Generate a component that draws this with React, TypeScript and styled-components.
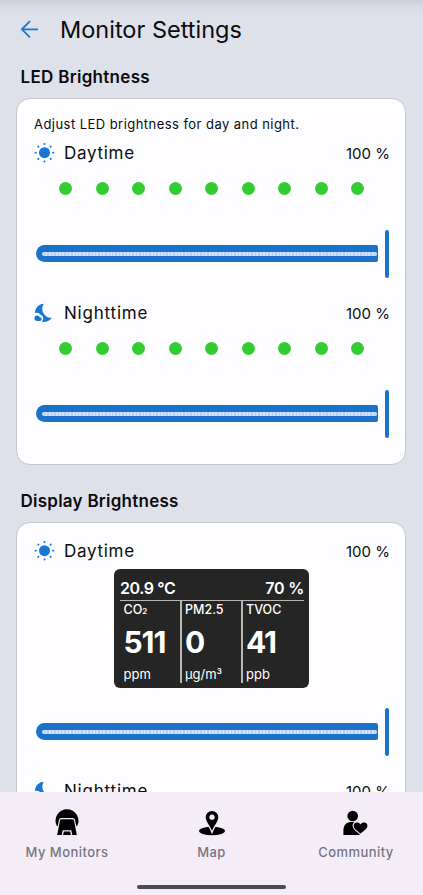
import React from 'react';
import styled, { createGlobalStyle } from 'styled-components';

const GlobalStyle = createGlobalStyle`
  * { box-sizing: border-box; }
  body { margin: 0; background: #dfe1ea; font-family: Inter, "Noto Sans", sans-serif; color: #0b0b0f; }
`;

const Screen = styled.div`
  height: 895px;
  display: flex;
  flex-direction: column;
  overflow: hidden;
  background: linear-gradient(#cdcfd7 0, #d8dae3 6px, #dfe1ea 14px);
`;

const Header = styled.header`
  flex: none;
  height: 60px;
  display: flex;
  align-items: center;
  padding-left: 19px;
`;

const Label = styled.span<{ $size: number; $gap?: number; $weight?: number; $color?: string }>`
  font-size: ${(p) => p.$size}px;
  letter-spacing: ${(p) => p.$gap ?? 0}px;
  font-weight: ${(p) => p.$weight ?? 400};
  color: ${(p) => p.$color ?? 'inherit'};
  line-height: 1;
  white-space: nowrap;
`;

const RowLabel = styled(Label)`
  padding-top: 1px;
`;

const BackIcon = styled.svg`
  width: 22px;
  height: 22px;
  margin-right: 19px;
`;

const Content = styled.main`
  flex: 1;
  min-height: 0;
  overflow: hidden;
  padding: 0 17px 0 16px;
`;

const SectionTitle = styled.h2<{ $height: number }>`
  margin: 0;
  height: ${(p) => p.$height}px;
  padding: 0 0 12px 4.5px;
  display: flex;
  align-items: flex-end;
`;

const Card = styled.section<{ $top: number; $height: number }>`
  height: ${(p) => p.$height}px;
  padding: ${(p) => p.$top}px 15px 0 17px;
  background: #fdfdff;
  border: 1px solid #c5c6ce;
  border-radius: 14px;
`;

const Hint = styled.div`
  height: 17px;
  margin-bottom: 2px;
  display: flex;
  align-items: center;
`;

const Row = styled.div`
  height: 36px;
  display: flex;
  align-items: center;
`;

const RowIcon = styled.svg`
  width: 22px;
  height: 22px;
  margin-right: 8px;
`;

const RowValue = styled.div`
  margin-left: auto;
  display: flex;
`;

const Dots = styled.div`
  height: 34px;
  padding: 0 26px 0 25px;
  display: flex;
  align-items: center;
  justify-content: space-between;
`;

const Dot = styled.i`
  width: 13px;
  height: 13px;
  border-radius: 50%;
  background: #33cc33;
`;

const Slider = styled.div<{ $top: number; $bottom: number }>`
  height: 48px;
  margin: ${(p) => p.$top}px 0 ${(p) => p.$bottom}px;
  padding-left: 2px;
  display: flex;
  align-items: center;
  gap: 7px;
`;

const Track = styled.div`
  width: 342px;
  height: 17px;
  margin-bottom: 1px;
  padding: 0 1px 0 6px;
  display: flex;
  align-items: center;
  border-radius: 8.5px 2px 2px 8.5px;
  background: #1b72cd;
`;

const Ticks = styled.div`
  flex: 1;
  height: 4px;
  border-radius: 2px;
  background: repeating-linear-gradient(90deg, #d3e2f8 0 2px, #b4cff0 2px 3.4px);
`;

const Thumb = styled.div`
  width: 4px;
  height: 48px;
  border-radius: 2px;
  background: #1b72cd;
`;

const Monitor = styled.div`
  width: 195px;
  height: 119px;
  margin-left: 80px;
  padding: 9px 5px 5px 6px;
  border-radius: 6px;
  background: #252525;
  color: #fff;
`;

const MonitorTop = styled.div`
  height: 23px;
  padding-top: 2px;
  display: flex;
  justify-content: space-between;
  border-bottom: 1px solid #b7b7b4;
`;

const Readings = styled.div`
  display: grid;
  grid-template-columns: 60px 61px 1fr;
  height: 82px;
`;

const Reading = styled.div`
  padding: 3px 0 0 3.5px;
  display: grid;
  grid-template-rows: 13px 50px 14px;
  align-content: start;
  align-items: center;
  & + & { border-left: 2px solid #b7b7b4; padding-left: 3px; }
  sub, sup { font-size: 8px; line-height: 0; font-weight: 600; letter-spacing: 0; }
  sub { vertical-align: 0; }
  sup { vertical-align: 5px; }
`;

const NavBar = styled.nav`
  flex: none;
  height: 103px;
  display: flex;
  flex-direction: column;
  align-items: center;
  background: #f4edf8;
`;

const Tabs = styled.div`
  width: 100%;
  height: 93px;
  display: grid;
  grid-template-columns: 134px 155px 134px;
`;

const Tab = styled.div`
  display: flex;
  flex-direction: column;
  align-items: center;
  padding-top: 16px;
  gap: 8px;
`;

const TabIcon = styled.svg`
  width: 30px;
  height: 30px;
`;

const HomeIndicator = styled.div`
  width: 149px;
  height: 4px;
  border-radius: 2px;
  background: #4d4953;
`;

const Sun = () => (
  <RowIcon viewBox="0 0 22 22" fill="#1976d2">
    <circle cx="10.5" cy="10.7" r="5.5" />
    {[0, 45, 90, 135, 180, 225, 270, 315].map((a) => (
      <rect key={a} x="9.6" y="0.9" width="1.8" height="2.1" rx=".7" transform={`rotate(${a} 10.5 10.7)`} />
    ))}
  </RowIcon>
);

const Moon = () => (
  <RowIcon viewBox="0.9 0.2 24 24" fill="#1976d2">
    <path d="M11.1 12.08C8.77 7.57 10.6 3.6 11.63 2.01 6.27 2.2 1.98 6.59 1.98 12c0 .14.02.28.02.42.62-.27 1.29-.42 2-.42 1.66 0 3.18.83 4.1 2.15A4 4 0 0 1 11 18c0 1.52-.87 2.83-2.12 3.51.98.32 2.03.5 3.11.5 3.5 0 6.58-1.8 8.37-4.52-2.36.23-6.98-.97-9.26-5.41z" />
    <path d="M7 16h-.18C6.4 14.84 5.3 14 4 14c-1.66 0-3 1.34-3 3s1.34 3 3 3h3c1.1 0 2-.9 2-2s-.9-2-2-2z" transform="translate(.3 .8)" />
  </RowIcon>
);

const MonitorIcon = () => (
  <TabIcon viewBox="0 0 30 30">
    <path d="M4.8 18A11.5 11.5 0 1 1 25.2 18Z" />
    <path d="M9.2 11.2H20.8Q21.7 11.2 22 12.2L24.8 27H20.3L19.3 22.2H10.7L9.7 27H5.2L8 12.2Q8.3 11.2 9.2 11.2Z" stroke="#f4edf8" strokeWidth="2.2" paintOrder="stroke" />
    <path d="M11.9 23.4H18.1L18.9 27H11.1Z" />
  </TabIcon>
);

const MapIcon = () => (
  <TabIcon viewBox="0 0 30 30">
    <ellipse cx="15" cy="23" rx="13" ry="4.2" />
    <path d="M15 3A6.3 6.3 0 0 0 8.7 9.3C8.7 13.5 12.6 17 15 23 17.4 17 21.3 13.5 21.3 9.3A6.3 6.3 0 0 0 15 3Z" stroke="#f4edf8" strokeWidth="2.4" paintOrder="stroke" />
    <circle cx="15" cy="9.2" r="2.6" fill="#f4edf8" />
  </TabIcon>
);

const CommunityIcon = () => (
  <TabIcon viewBox="0 0 30 30">
    <circle cx="11.7" cy="8" r="5.3" />
    <path d="M2.4 27V22.5C2.4 17.5 5.5 14 9.5 14H17V24.5L19.5 27Z" />
    <path d="M19.5 25.6C16.5 23 12.7 20.8 12.7 17.7 12.7 14.1 17.4 13.3 19.5 16.4 21.6 13.3 26.4 14.1 26.4 17.7 26.4 20.8 22.3 23 19.5 25.6Z" stroke="#f4edf8" strokeWidth="2.2" paintOrder="stroke" />
  </TabIcon>
);

const Brightness = ({ night }: { night?: boolean }) => (
  <Row>
    {night ? <Moon /> : <Sun />}
    <RowLabel $size={17} $gap={night ? 0.8 : 0.7}>{night ? 'Nighttime' : 'Daytime'}</RowLabel>
    <RowValue><Label $size={15}>100 %</Label></RowValue>
  </Row>
);

const LedRow = () => (
  <Dots>{Array.from({ length: 9 }, (_, i) => <Dot key={i} />)}</Dots>
);

const FullSlider = ({ top, bottom = 17 }: { top: number; bottom?: number }) => (
  <Slider $top={top} $bottom={bottom}><Track><Ticks /></Track><Thumb /></Slider>
);

const readings = [
  { name: <>CO<sub>2</sub></>, value: '511', unit: 'ppm' },
  { name: 'PM2.5', value: '0', unit: <>µg/m<sup>3</sup></> },
  { name: 'TVOC', value: '41', unit: 'ppb' },
];

const tabs = [
  { name: 'My Monitors', Icon: MonitorIcon },
  { name: 'Map', Icon: MapIcon },
  { name: 'Community', Icon: CommunityIcon },
];

export default function App() {
  return (
    <Screen>
      <GlobalStyle />
      <Header>
        <BackIcon viewBox="0 0 22 22" fill="none" stroke="#1976d2" strokeWidth="1.8">
          <path d="M11 2.2 2.9 10.3 11 18.4M3 10.3H19" />
        </BackIcon>
        <Label $size={23.5}>Monitor Settings</Label>
      </Header>
      <Content>
        <SectionTitle $height={38}><Label $size={17} $weight={600} $gap={0.3}>LED Brightness</Label></SectionTitle>
        <Card $top={17} $height={367}>
          <Hint><Label $size={13} $gap={0.45}>Adjust LED brightness for day and night.</Label></Hint>
          <Brightness />
          <LedRow />
          <FullSlider top={25} />
          <Brightness night />
          <LedRow />
          <FullSlider top={25} bottom={0} />
        </Card>
        <SectionTitle $height={57}><Label $size={17} $weight={600} $gap={0.25}>Display Brightness</Label></SectionTitle>
        <Card $top={10} $height={400}>
          <Brightness />
          <Monitor>
            <MonitorTop>
              <Label $size={16} $weight={600} $gap={-0.4}>20.9 °C</Label>
              <Label $size={16} $weight={600} $gap={-0.2}>70 %</Label>
            </MonitorTop>
            <Readings>
              {readings.map((r, i) => (
                <Reading key={i}>
                  <Label $size={12.5} $weight={500}>{r.name}</Label>
                  <Label $size={30} $weight={700} $gap={-1.1}>{r.value}</Label>
                  <Label $size={13}>{r.unit}</Label>
                </Reading>
              ))}
            </Readings>
          </Monitor>
          <FullSlider top={20} />
          <Brightness night />
        </Card>
      </Content>
      <NavBar>
        <Tabs>
          {tabs.map(({ name, Icon }) => (
            <Tab key={name}>
              <Icon />
              <Label $size={13} $weight={500} $gap={0.45} $color="#777480">{name}</Label>
            </Tab>
          ))}
        </Tabs>
        <HomeIndicator />
      </NavBar>
    </Screen>
  );
}
